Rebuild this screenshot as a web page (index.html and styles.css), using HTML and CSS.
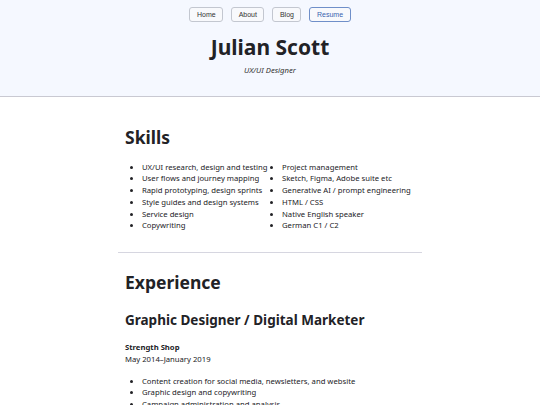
FILE: index.html
```html
<!DOCTYPE html>
<html lang="en">
<head>
<meta charset="utf-8">
<title>Julian Scott – Resume</title>
<link rel="stylesheet" href="styles.css">
</head>
<body>
<header class="site-header">
  <nav class="nav">
    <a class="nav-btn" href="#">Home</a>
    <a class="nav-btn" href="#">About</a>
    <a class="nav-btn" href="#">Blog</a>
    <a class="nav-btn active" href="#">Resume</a>
  </nav>
  <h1 class="name">Julian Scott</h1>
  <p class="role">UX/UI Designer</p>
</header>
<main class="main">
  <section class="section">
    <h2 class="section-title">Skills</h2>
    <div class="skills">
      <ul class="list col1">
        <li>UX/UI research, design and testing</li>
        <li>User flows and journey mapping</li>
        <li>Rapid prototyping, design sprints</li>
        <li>Style guides and design systems</li>
        <li>Service design</li>
        <li>Copywriting</li>
      </ul>
      <ul class="list col2">
        <li>Project management</li>
        <li>Sketch, Figma, Adobe suite etc</li>
        <li>Generative AI / prompt engineering</li>
        <li>HTML / CSS</li>
        <li>Native English speaker</li>
        <li>German C1 / C2</li>
      </ul>
    </div>
  </section>
  <hr class="divider">
  <section class="section">
    <h2 class="section-title exp">Experience</h2>
    <h3 class="job-title">Graphic Designer / Digital Marketer</h3>
    <p class="company">Strength Shop</p>
    <p class="dates">May 2014–January 2019</p>
    <ul class="list duties">
      <li>Content creation for social media, newsletters, and website</li>
      <li>Graphic design and copywriting</li>
      <li>Campaign administration and analysis</li>
    </ul>
  </section>
</main>
</body>
</html>
```

FILE: styles.css
```css
html, body {
  margin: 0;
  padding: 0;
}
body {
  font-family: "Noto Sans", "Open Sans", sans-serif;
  color: #222226;
  background: #ffffff;
  font-size: 7.7px;
  line-height: 11.8px;
}
.site-header {
  background: #f5f8ff;
  border-bottom: 1px solid #c9c9d2;
  box-sizing: border-box;
  height: 97px;
  padding-top: 7px;
  text-align: center;
}
.nav {
  display: flex;
  justify-content: center;
  gap: 8px;
}
.nav-btn {
  font-family: "Liberation Sans", Arial, sans-serif;
  font-size: 7px;
  line-height: 13px;
  height: 15px;
  box-sizing: border-box;
  padding: 0 6.5px;
  border: 1px solid #c3c7d0;
  border-radius: 3px;
  background: #f8f9fc;
  color: #333;
  text-decoration: none;
}
.nav-btn.active {
  border-color: #6f8fc9;
  color: #3a62b0;
}
.name {
  margin: 12px 0 0;
  font-size: 21px;
  line-height: 26px;
  font-weight: 700;
  color: #222226;
}
.role {
  margin: 5px 0 0;
  font-style: italic;
  font-size: 7.7px;
  line-height: 11px;
  color: #333;
}
.main {
  width: 304px;
  margin: 0 auto;
}
.section {
  padding: 0 7px;
}
.section-title {
  margin: 29px 0 0;
  font-size: 17.5px;
  line-height: 22px;
  font-weight: 700;
}
.skills {
  display: flex;
  margin-top: 13.5px;
  white-space: nowrap;
}
.list {
  margin: 0;
  padding-left: 17px;
}
.col1 {
  width: 140px;
  flex: none;
  box-sizing: border-box;
}
.divider {
  margin: 19.9px 0 0;
  border: 0;
  border-top: 1px solid #d6d6e0;
}
.section-title.exp {
  margin-top: 18px;
}
.job-title {
  margin: 18.8px 0 0;
  font-size: 13.5px;
  line-height: 17px;
  font-weight: 700;
}
.company {
  margin: 13.2px 0 0;
  font-weight: 700;
}
.dates {
  margin: 0;
}
.duties {
  margin-top: 9.8px;
}
```
